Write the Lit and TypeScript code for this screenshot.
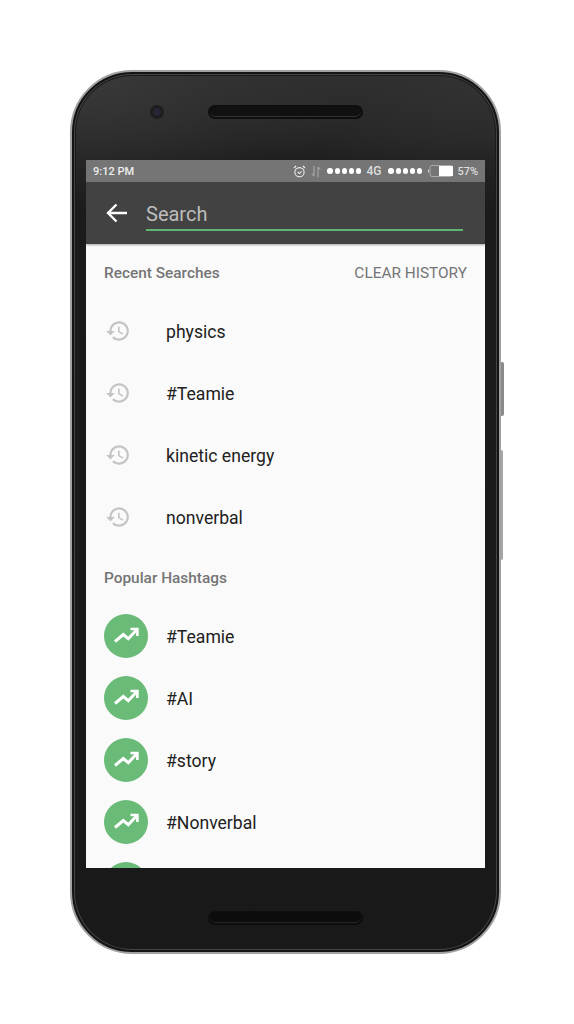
import { LitElement, html, css } from "lit";
import { customElement } from "lit/decorators.js";

const recent = ["physics", "#Teamie", "kinetic energy", "nonverbal"];
const popular = ["#Teamie", "#AI", "#story", "#Nonverbal", ""];

const dots = html`<span class="dots">${[0, 1, 2, 3, 4].map(() => html`<i></i>`)}</span>`;

@customElement("app-root")
export class AppRoot extends LitElement {
  static styles = css`
    :host { display: block; width: 574px; height: 1024px; background: #fff; overflow: hidden; font-family: Roboto, "Liberation Sans", sans-serif; }
    .stage { padding: 70px 0 0 70px; }
    .phone {
      position: relative; box-sizing: border-box; width: 431px; height: 884px; border-radius: 62px;
      background:
        radial-gradient(ellipse 300px 140px at 0 0, #3a3a3a 0, rgba(58,58,58,0) 100%),
        radial-gradient(ellipse 300px 140px at 100% 0, #333 0, rgba(51,51,51,0) 100%),
        linear-gradient(180deg, #2a2a2a 0, #202020 70px, #1b1b1b 90px, #191919 100%);
      border: 2px solid #a2a2a2;
      box-shadow: inset 0 0 0 2px #141414, inset 0 0 0 3px #444, inset 0 0 0 4px #1a1a1a;
      display: flex; flex-direction: column; padding: 0 14px 0 14px;
    }
    .btn { position: absolute; left: 429px; width: 3px; background: #8a8a8a; border-radius: 0 2px 2px 0; }
    .btn.a { top: 290px; height: 54px; }
    .btn.b { top: 378px; height: 110px; width: 2px; background: #a5a5a5; }
    .top { height: 88px; flex: none; display: flex; align-items: center; padding-bottom: 8px; box-sizing: border-box; }
    .cam { width: 14px; height: 14px; border-radius: 50%; margin-left: 64px; background: radial-gradient(circle at 50% 50%, #2a2438 0 3px, #1c1c1c 5px, #212121 100%); }
    .speaker { width: 155px; height: 14px; box-sizing: border-box; margin-left: 44px; border-radius: 7px; background: #111; border: 2px solid #0e0e0e; box-shadow: inset 0 -1px 0 #333; }
    .bottom { height: 83px; flex: none; display: flex; align-items: center; justify-content: center; padding: 17px 1px 0 0; box-sizing: border-box; }
    .bottom .speaker { margin: 0; background: #0c0c0c; box-shadow: inset 0 -1px 0 #262626; }
    .screen { flex: none; height: 708px; width: 399px; display: flex; flex-direction: column; overflow: hidden; background: #fafafa; }
    .status { height: 22px; flex: none; box-sizing: border-box; background: #757575; color: #eee; display: flex; align-items: center; padding: 0 7px; font-size: 11px; font-weight: 500; }
    .time { margin-right: auto; }
    .status svg { display: block; flex: none; }
    .alarm { margin-right: 5px; }
    .arrows { margin-right: 6px; }
    .dots { display: flex; gap: 1.5px; }
    .dots i { width: 5.6px; height: 5.6px; border-radius: 50%; background: #fff; display: block; }
    .net { margin: 0 7px 0 5px; color: #ddd; font-size: 12px; }
    .batt { margin: 0 4px 0 6px; }
    .pct { color: #ddd; }
    .bar { height: 62px; flex: none; box-sizing: border-box; background: #424242; display: flex; align-items: flex-start; padding: 0 22px 0 20px; box-shadow: 0 1px 2px rgba(0,0,0,.35); position: relative; }
    .back { flex: none; margin: 20px 18px 0 0; }
    .field { flex: 1; height: 38px; margin-top: 11px; padding-top: 3px; box-sizing: border-box; border-bottom: 2.5px solid #5fb571; color: #bdbdbd; font-size: 20px; line-height: 36px; }
    .list { flex: 1; min-height: 0; overflow: hidden; }
    .head { display: flex; justify-content: space-between; align-items: center; box-sizing: border-box; height: 57px; padding: 2px 18px 0; color: #757575; font-size: 15.4px; }
    .head b { font-weight: 500; }
    .head.first { height: 56px; padding-top: 1px; }
    .row { display: flex; align-items: center; height: 62px; padding-left: 18px; color: #212121; font-size: 17.6px; }
    .row .label { padding-top: 1px; }
    .ico { width: 44px; flex: none; margin-right: 18px; display: flex; }
    .ico svg { margin-left: 1px; }
    .circle { width: 44px; height: 44px; border-radius: 50%; background: #6abb78; display: flex; align-items: center; justify-content: center; flex: none; margin-right: 18px; }
  `;

  render() {
    return html`<div class="stage">
      <div class="phone">
        <span class="btn a"></span><span class="btn b"></span>
        <div class="top"><span class="cam"></span><span class="speaker"></span></div>
        <div class="screen">
          <div class="status">
            <span class="time">9:12 PM</span>
            <svg class="alarm" width="13" height="13" viewBox="0 0 13 13" fill="none" stroke="#eee" stroke-width="1.1"><circle cx="6.500" cy="7.200" r="4.600"/><path d="M1 3 3 1M12 3 10 1M4.600 7l1.800 1.600L8.600 6.400"/></svg>
            <svg class="arrows" width="10" height="11" viewBox="0 0 10 11" fill="none" stroke="#9e9e9e" stroke-width="1.4"><path d="M3 0v10M.8 7.600 3 10M7 11V1M7 1l2.200 2.400"/></svg>
            ${dots}
            <span class="net">4G</span>
            ${dots}
            <svg class="batt" width="25" height="12" viewBox="0 0 25 12"><path d="M0 4.500h1v3H0z" fill="#ccc"/><rect x="2" y=".5" width="22.500" height="11" rx="2" fill="none" stroke="#aaa"/><rect x="11" y="1" width="14" height="10" fill="#fff"/></svg>
            <span class="pct">57%</span>
          </div>
          <div class="bar">
            <svg class="back" width="22" height="22" viewBox="0 0 22 22" fill="none" stroke="#fff" stroke-width="2.400"><path d="M21 11H2.500M10.500 2.500 2 11l8.500 8.500"/></svg>
            <div class="field">Search</div>
          </div>
          <div class="list">
            <div class="head first"><b>Recent Searches</b><span>CLEAR HISTORY</span></div>
            ${recent.map((t) => html`<div class="row">
              <span class="ico"><svg width="26" height="26" viewBox="0 0 24 24" fill="#c4c4c4"><path d="M13 3a9 9 0 0 0-9 9H1l3.900 3.900.07.140L9 12H6a7 7 0 1 1 2.050 4.950L6.630 18.370A9 9 0 1 0 13 3zm-1 5v5l4.280 2.540.72-1.210-3.500-2.080V8H12z"/></svg></span>
              <span class="label">${t}</span>
            </div>`)}
            <div class="head"><b>Popular Hashtags</b></div>
            ${popular.map((t) => html`<div class="row">
              <span class="circle"><svg width="28" height="28" viewBox="0 0 28 28" fill="none" stroke="#fff" stroke-width="3"><path d="M3 19.500l8.300-7 5 4.200L24.500 8"/><path d="M18.500 7h6.900v6.900" stroke-width="2.600"/></svg></span>
              <span class="label">${t}</span>
            </div>`)}
          </div>
        </div>
        <div class="bottom"><span class="speaker"></span></div>
      </div>
    </div>`;
  }
}
